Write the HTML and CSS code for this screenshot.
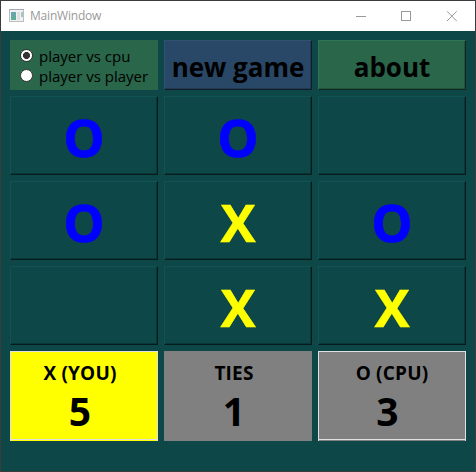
FILE: index.html
```
<!DOCTYPE html>
<html lang="en">
<head>
<meta charset="utf-8">
<title>MainWindow</title>
<link rel="stylesheet" href="styles.css">
</head>
<body>
<div class="window">
  <header class="titlebar">
    <svg class="app-icon" width="15" height="13" viewBox="0 0 15 13">
      <defs><linearGradient id="pane" x1="0" y1="0" x2="1" y2="1"><stop offset="0" stop-color="#6f9fc4"/><stop offset="1" stop-color="#55b381"/></linearGradient></defs>
      <rect x=".5" y=".5" width="14" height="12" fill="#f1f1f3" stroke="#b9bec4"/>
      <path d="M0 .5h15" stroke="#a3a9b0"/>
      <rect x="2" y="3" width="5" height="8" fill="url(#pane)"/>
      <rect x="8" y="3" width="3" height="8" fill="#e0e0e4"/>
      <rect x="12" y="3" width="2" height="5" fill="#9fcbb4"/>
    </svg>
    <span class="title">MainWindow</span>
    <svg class="controls" width="102" height="11" viewBox="0 0 102 11" fill="none" stroke="#999">
      <path d="M0 5.5h10"/>
      <rect x="45.5" y=".5" width="9" height="9"/>
      <path d="M91 .3l9.7 9.7M100.700 .3L91 10"/>
    </svg>
  </header>
  <main class="grid">
    <div class="modes">
      <label class="mode"><span class="radio checked"></span><span>player vs cpu</span></label>
      <label class="mode"><span class="radio"></span><span>player vs player</span></label>
    </div>
    <button class="btn new">new game</button>
    <button class="btn about">about</button>

    <button class="cell o">O</button>
    <button class="cell o">O</button>
    <button class="cell"></button>
    <button class="cell o">O</button>
    <button class="cell x">X</button>
    <button class="cell o">O</button>
    <button class="cell"></button>
    <button class="cell x">X</button>
    <button class="cell x">X</button>

    <section class="score you"><h2>X (YOU)</h2><p>5</p></section>
    <section class="score ties"><h2>TIES</h2><p>1</p></section>
    <section class="score cpu"><h2>O (CPU)</h2><p>3</p></section>
  </main>
</div>
</body>
</html>
```
FILE: styles.css
```
* { box-sizing: border-box; }
body { margin: 0; font-family: "Open Sans", "Noto Sans", sans-serif; color: #000; }
.window {
  width: 476px;
  height: 472px;
  background: #0e4747;
  border: 1px solid #3c3c3f;
  overflow: hidden;
}
.titlebar {
  height: 30px;
  background: #fff;
  display: flex;
  align-items: center;
  padding: 0 16px 0 8px;
}
.app-icon { margin-top: -1px; }
.title { margin-left: 6px; font-size: 12px; letter-spacing: -0.2px; color: #999; line-height: 16px; }
.controls { margin-left: auto; margin-right: 1px; }
.grid {
  display: grid;
  grid-template-columns: repeat(3, 148px);
  grid-template-rows: 50px repeat(3, 79px) 90px;
  gap: 6px;
  padding: 9px;
}
.modes { background: #29664a; padding: 6px 0 0 10px; }
.mode { display: flex; align-items: center; height: 20px; font-size: 15px; line-height: 20px; white-space: nowrap; }
.radio {
  width: 13px;
  height: 13px;
  border-radius: 50%;
  border: 1px solid #333;
  background: #fff;
  margin-right: 6px;
  margin-top: -1px;
  flex: none;
}
.radio.checked { background: radial-gradient(circle, #333 3.2px, #fff 3.800px); }
.btn, .cell {
  font-family: inherit;
  font-weight: 700;
  padding: 0;
  margin: 0;
  border: 1px solid;
  white-space: nowrap;
  display: flex;
  align-items: center;
  justify-content: center;
}
.btn { font-size: 26px; line-height: 36px; padding-top: 3px; color: #000; }
.new { background: #294766; border-color: #2e5174 #111d29 #111d29 #2e5174; box-shadow: inset -1px -1px #213952; }
.about { background: #29664a; border-color: #2f7455 #10291e #10291e #2f7455; box-shadow: inset -1px -1px #21523b; }
.cell {
  font-size: 52px;
  line-height: 70px;
  background: #0e4747;
  border-color: #115353 #061c1c #061c1c #115353;
  box-shadow: inset -1px -1px #0b3636;
  padding-top: 3px;
}
.o { color: #00f; -webkit-text-stroke: 0.7px #00f; }
.x { color: #ff0; -webkit-text-stroke: 0.7px #ff0; }
.score { background: #808080; text-align: center; padding: 9px 8px 0 0; }
.score h2 { margin: 0; font-size: 19px; line-height: 26px; letter-spacing: 0.2px; }
.score p { margin: 0; padding-left: 0; font-size: 39px; line-height: 50px; font-weight: 700; }
.score.cpu h2 { padding-left: 8px; }
.score.cpu p { margin-left: -1px; }
.you { background: #ff0; }
.you, .cpu { box-shadow: inset 0 1px #e0e0e0, inset 1px 0 #e0e0e0, inset -1px 0 #e0e0e0; position: relative; }
.you::after, .cpu::after { content: ""; position: absolute; left: 0; right: 0; bottom: 1px; height: 1px; background: #e0e0e0; }
```
